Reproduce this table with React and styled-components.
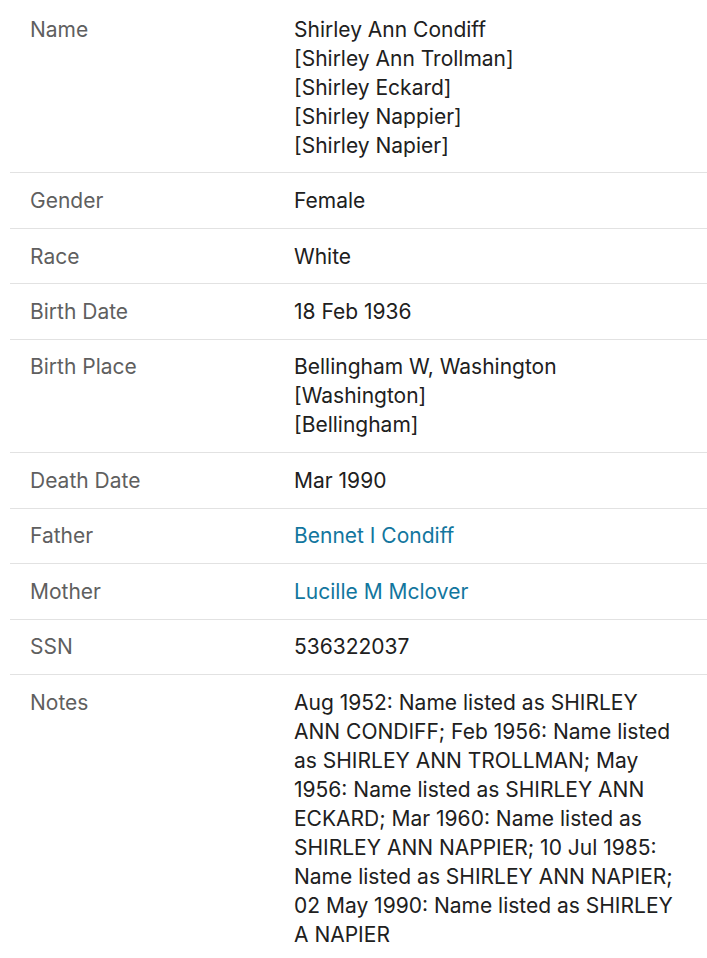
import React from 'react'
import styled, { createGlobalStyle } from 'styled-components'

const GlobalStyle = createGlobalStyle`
    body {
        margin: 0;
        background: #fff;
        font-family: Inter, 'Liberation Sans', Arial, sans-serif;
    }
`

const Table = styled.div`
    margin-left: 10px;
    padding-top: 2px;
`

const Row = styled.div`
    display: grid;
    grid-template-columns: 284px 1fr;
    padding: 12.73px 0;
    border-top: ${p => (p.first ? 'none' : '1px solid #e2e2e2')};
    font-size: 21px;
    line-height: 29px;
`

const Label = styled.div`
    padding-left: 20px;
    color: #5f5f5f;
`

const Value = styled.div`
    color: #202020;
    padding-right: 22px;
`

const Line = styled.div``

const PersonLink = styled.a`
    color: #12769e;
    text-decoration: none;
    cursor: pointer;
`

const rows = [
    {
        label: 'Name',
        lines: [
            'Shirley Ann Condiff',
            '[Shirley Ann Trollman]',
            '[Shirley Eckard]',
            '[Shirley Nappier]',
            '[Shirley Napier]',
        ],
    },
    { label: 'Gender', lines: ['Female'] },
    { label: 'Race', lines: ['White'] },
    { label: 'Birth Date', lines: ['18 Feb 1936'] },
    { label: 'Birth Place', lines: ['Bellingham W, Washington', '[Washington]', '[Bellingham]'] },
    { label: 'Death Date', lines: ['Mar 1990'] },
    { label: 'Father', link: 'Bennet I Condiff' },
    { label: 'Mother', link: 'Lucille M Mclover' },
    { label: 'SSN', lines: ['536322037'] },
    {
        label: 'Notes',
        lines: [
            'Aug 1952: Name listed as SHIRLEY ANN CONDIFF; Feb 1956: Name listed as SHIRLEY ANN TROLLMAN; May 1956: Name listed as SHIRLEY ANN ECKARD; Mar 1960: Name listed as SHIRLEY ANN NAPPIER; 10 Jul 1985: Name listed as SHIRLEY ANN NAPIER; 02 May 1990: Name listed as SHIRLEY A NAPIER',
        ],
    },
]

const App = () => {
    return (
        <>
            <GlobalStyle />
            <Table>
                {rows.map((row, i) => (
                    <Row key={row.label} first={i === 0}>
                        <Label>{row.label}</Label>
                        <Value>
                            {row.link ? (
                                <PersonLink>{row.link}</PersonLink>
                            ) : (
                                row.lines.map(l => <Line key={l}>{l}</Line>)
                            )}
                        </Value>
                    </Row>
                ))}
            </Table>
        </>
    )
}

export default App
